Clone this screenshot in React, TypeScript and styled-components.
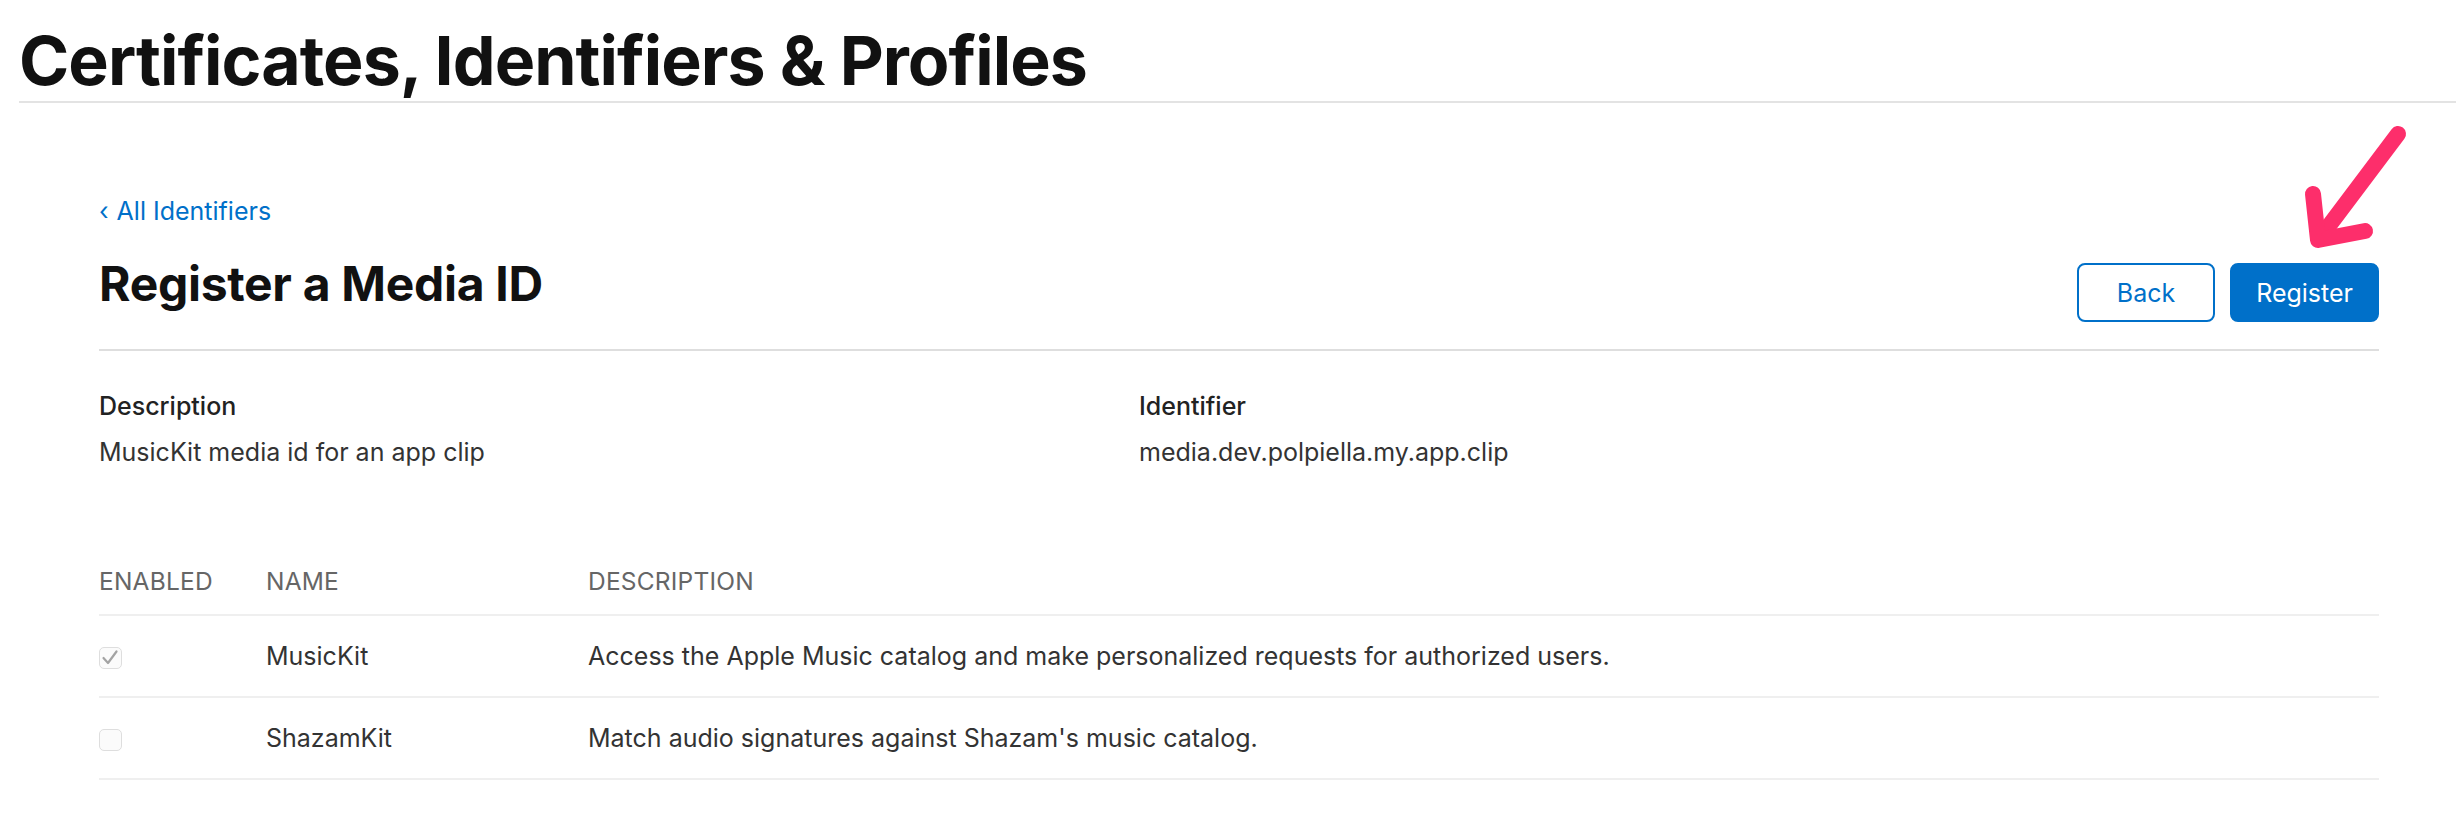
import styled, { createGlobalStyle } from 'styled-components'

const GlobalStyle = createGlobalStyle`
  body {
    margin: 0;
    background: #fff;
    font-family: Inter, "Liberation Sans", sans-serif;
    color: #333;
  }
`

const blue = '#0070c9'

const PageHeader = styled.header`
  margin: 0 8px 0 19px;
  border-bottom: 2px solid #e3e3e3;
`

const PageTitle = styled.h1`
  margin: 0;
  padding-top: 19px;
  font-size: 68px;
  line-height: 82px;
  font-weight: 700;
  letter-spacing: -0.95px;
  color: #111;
`

const Content = styled.main`
  margin: 0 85px 0 99px;
  padding-top: 92px;
`

const BackLink = styled.a`
  display: inline-flex;
  align-items: center;
  gap: 8px;
  font-size: 25px;
  color: ${blue};
  text-decoration: none;
  line-height: 32px;
`

const TopBar = styled.div`
  display: flex;
  align-items: flex-end;
  justify-content: space-between;
  padding: 28px 0 27px;
  border-bottom: 2px solid #dedede;
`

const Heading = styled.h2`
  margin: 0 0 9px;
  font-size: 48px;
  font-weight: 700;
  line-height: 58px;
  color: #111;
  letter-spacing: -0.3px;
`

const Actions = styled.div`
  display: flex;
  gap: 15px;
  position: relative;
`

const Button = styled.button<{ $primary?: boolean }>`
  height: 59px;
  padding: 0 ${(p) => (p.$primary ? 24 : 38)}px;
  border: 2px solid ${blue};
  border-radius: 8px;
  background: ${(p) => (p.$primary ? blue : '#fff')};
  color: ${(p) => (p.$primary ? '#fff' : blue)};
  font-family: inherit;
  font-size: 25px;
  cursor: pointer;
`

const Arrow = styled.svg`
  position: absolute;
  right: -41px;
  top: -144px;
`

const Fields = styled.div`
  display: grid;
  grid-template-columns: 1040px 1fr;
  padding-top: 40px;
`

const Field = styled.div`
  display: flex;
  flex-direction: column;
  gap: 16px;
`

const FieldLabel = styled.div`
  font-size: 25px;
  font-weight: 500;
  line-height: 30px;
  color: #222;
`

const FieldValue = styled.div`
  font-size: 25px;
  line-height: 30px;
  color: #333;
`

const Table = styled.div`
  margin-top: 80px;
`

const Row = styled.div<{ $head?: boolean }>`
  display: grid;
  grid-template-columns: 167px 322px 1fr;
  align-items: center;
  height: ${(p) => (p.$head ? 67 : 80)}px;
  border-bottom: 2px solid #efefef;
  font-size: 25px;
  color: #333;
`

const HeadCell = styled.div`
  font-size: 24.5px;
  color: #666;
  text-transform: uppercase;
  letter-spacing: 0.2px;
`

const Checkbox = styled.span`
  display: inline-flex;
  width: 23px;
  height: 22px;
  border: 1.5px solid #dedede;
  border-radius: 5px;
  background: #fbfbfb;
  box-sizing: border-box;
  vertical-align: middle;
`

const services = [
  {
    name: 'MusicKit',
    description:
      'Access the Apple Music catalog and make personalized requests for authorized users.',
    checked: true,
  },
  {
    name: 'ShazamKit',
    description: "Match audio signatures against Shazam's music catalog.",
    checked: false,
  },
]

export default function App() {
  return (
    <>
      <GlobalStyle />
      <PageHeader>
        <PageTitle>Certificates, Identifiers &amp; Profiles</PageTitle>
      </PageHeader>
      <Content>
        <BackLink href="#">
          <span>‹</span>
          <span>All Identifiers</span>
        </BackLink>
        <TopBar>
          <Heading>Register a Media ID</Heading>
          <Actions>
            <Button>Back</Button>
            <Button $primary>Register</Button>
            <Arrow width="130" height="140" viewBox="0 0 130 140">
              <g
                stroke="#fd2e6b"
                strokeWidth="16"
                strokeLinecap="round"
                strokeLinejoin="round"
                fill="none"
              >
                <path d="M108 15 L29 120" />
                <path d="M23 75 L28 121 L75 112" />
              </g>
            </Arrow>
          </Actions>
        </TopBar>
        <Fields>
          <Field>
            <FieldLabel>Description</FieldLabel>
            <FieldValue>MusicKit media id for an app clip</FieldValue>
          </Field>
          <Field>
            <FieldLabel>Identifier</FieldLabel>
            <FieldValue>media.dev.polpiella.my.app.clip</FieldValue>
          </Field>
        </Fields>
        <Table>
          <Row $head>
            <HeadCell>Enabled</HeadCell>
            <HeadCell>Name</HeadCell>
            <HeadCell>Description</HeadCell>
          </Row>
          {services.map((s) => (
            <Row key={s.name}>
              <div>
                <Checkbox>
                  {s.checked && (
                    <svg width="20" height="19" viewBox="0 0 20 19">
                      <path
                        d="M3.5 10 L8 15 L16.5 3.5"
                        stroke="#a3a3a3"
                        strokeWidth="2.2"
                        strokeLinecap="round"
                        strokeLinejoin="round"
                        fill="none"
                      />
                    </svg>
                  )}
                </Checkbox>
              </div>
              <div>{s.name}</div>
              <div>{s.description}</div>
            </Row>
          ))}
        </Table>
      </Content>
    </>
  )
}
